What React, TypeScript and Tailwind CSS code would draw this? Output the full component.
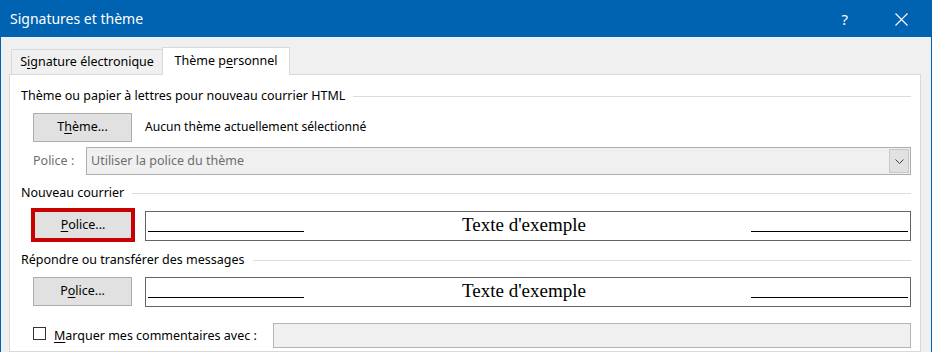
import React from "react";

const ui = "font-['Segoe_UI','Noto_Sans',sans-serif]";

function Key({ children }: { children: React.ReactNode }) {
  return <span className="underline underline-offset-[2px] decoration-1">{children}</span>;
}

function SectionHeader({ label }: { label: string }) {
  return (
    <div className="flex items-center h-[16px]">
      <span className="leading-[16px] whitespace-nowrap">{label}</span>
      <div className="flex-1 h-px bg-[#dcdcdc] ml-[8px]" />
    </div>
  );
}

function SampleBox() {
  return (
    <div className="flex-1 h-[30px] border border-[#646464] bg-white flex items-start px-[2px]">
      <div className="w-[156px] h-px bg-black mt-[19px]" />
      <div className="flex-1 text-center font-['Liberation_Serif',serif] text-[19px] leading-[22px] mt-[2px] pr-[7px] text-black">
        Texte d'exemple
      </div>
      <div className="w-[157px] h-px bg-black mt-[19px]" />
    </div>
  );
}

export default function App() {
  return (
    <div className={`w-[932px] h-[352px] overflow-hidden bg-[#f0f0f0] flex flex-col text-[12.5px] text-black ${ui}`}>
      {/* Title bar */}
      <div className="h-[37px] shrink-0 bg-[#0063b1] flex items-center pl-[10px] pr-[24px] text-white">
        <span className="flex-1 text-[14px] leading-[20px]">Signatures et thème</span>
        <span className="text-[15px] leading-[20px] mr-[47px]">?</span>
        <svg width="13" height="13" viewBox="0 0 13 13" className="mt-[1px]">
          <path d="M0.5 0.5 L12.5 12.5 M12.5 0.5 L0.5 12.5" stroke="white" strokeWidth="1.1" fill="none" />
        </svg>
      </div>

      <div className="flex-1 flex flex-col border-l border-r border-[#0063b1] pl-[8px] pr-[10px] pt-[10px]">
        {/* Tabs */}
        <div className="flex items-end h-[27px] pl-[2px]">
          <div className="h-[25px] w-[152px] border-l border-t border-r border-[#d9d9d9] bg-[#f0f0f0] flex items-center justify-center leading-[16px]">
            S<Key>i</Key>gnature électronique
          </div>
          <div className="relative z-10 -ml-[1px] -mb-px h-[28px] w-[128px] border-l border-t border-r border-[#d9d9d9] bg-white flex items-center justify-center leading-[16px] pb-[1px]">
            Thème p<Key>e</Key>rsonnel
          </div>
        </div>

        {/* Panel */}
        <div className="flex-1 border border-[#d9d9d9] bg-white pl-[11px] pr-[9px] pt-[13px]">
          <SectionHeader label="Thème ou papier à lettres pour nouveau courrier HTML" />

          <div className="flex items-center mt-[9px] h-[29px]">
            <div className="ml-[12px] w-[99px] h-[29px] border border-[#adadad] bg-[#e1e1e1] flex items-center justify-center">
              T<Key>h</Key>ème...
            </div>
            <span className="ml-[13px] text-[12.1px]">Aucun thème actuellement sélectionné</span>
          </div>

          <div className="flex items-center mt-[5px] h-[28px]">
            <span className="ml-[12px] w-[53px] text-[#6d6d6d]">Police :</span>
            <div className="flex-1 h-[28px] border border-[#adadad] bg-[#f0f0f0] flex items-center">
              <span className="flex-1 pl-[4px] text-[#6d6d6d]">Utiliser la police du thème</span>
              <div className="w-[20px] h-[24px] mr-[1px] bg-[#e1e1e1] border border-[#c8c8c8] flex items-center justify-center">
                <svg width="9" height="5" viewBox="0 0 9 5">
                  <path d="M0.5 0.5 L4.5 4.5 L8.5 0.5" stroke="#404040" strokeWidth="1" fill="none" />
                </svg>
              </div>
            </div>
          </div>

          <div className="mt-[10px]">
            <SectionHeader label="Nouveau courrier" />
          </div>

          <div className="flex items-start mt-[10px] h-[30px]">
            <div className="ml-[10px] -mt-[3px] w-[104px] h-[34px] border-[4px] border-[#c80000] bg-[#e1e1e1] flex items-center justify-center">
              <Key>P</Key>olice...
            </div>
            <div className="ml-[10px] flex-1 flex">
              <SampleBox />
            </div>
          </div>

          <div className="mt-[11px]">
            <SectionHeader label="Répondre ou transférer des messages" />
          </div>

          <div className="flex items-start mt-[9px] h-[30px]">
            <div className="ml-[12px] w-[99px] h-[29px] border border-[#adadad] bg-[#e1e1e1] flex items-center justify-center">
              P<Key>o</Key>lice...
            </div>
            <div className="ml-[13px] flex-1 flex">
              <SampleBox />
            </div>
          </div>

          <div className="flex items-start mt-[16px] h-[25px]">
            <div className="ml-[12px] mt-[4px] w-[13px] h-[13px] border border-[#333333] bg-white" />
            <span className="ml-[8px] w-[219px] leading-[25px]">
              <Key>M</Key>arquer mes commentaires avec :
            </span>
            <div className="flex-1 h-[25px] border border-[#b4b4b4] bg-[#f0f0f0]" />
          </div>
        </div>
      </div>
    </div>
  );
}
